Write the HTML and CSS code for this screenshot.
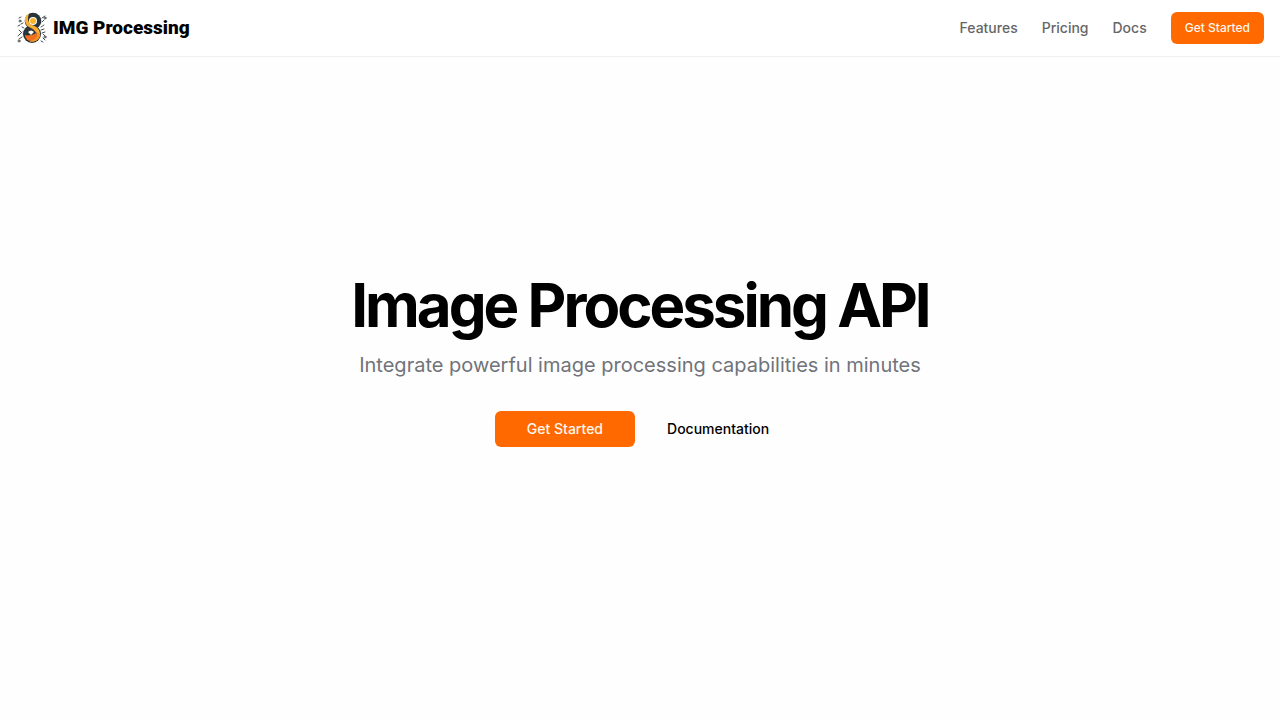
FILE: index.html
```
<!DOCTYPE html>
<html lang="en">
<head>
    <meta charset="UTF-8">
    <meta name="viewport" content="width=device-width, initial-scale=1.0">
    <title>IMG Processing</title>
    <link rel="stylesheet" href="styles.css">
</head>
<body>
    <header class="navbar">
        <a class="brand" href="#">
            <svg class="brand-logo" viewBox="0 0 32 32" fill="none" aria-hidden="true">
                <!-- sparks and circuit dots -->
                <g stroke="#4a5055" stroke-width="1" stroke-linecap="round">
                    <path d="M3 6l2-1M7 11l-2 1M2 14l2-1M6 15l2 1M3 18l3 3M2 24l4-4M3 27l3-2M26 6l3-2M26 10l2-2M28 13l-3 2M25 18l3-1M29 20l-3 1M27 26l2 2M27 22l2 2M25 29l2 1"/>
                    <circle cx="4" cy="9" r="1"/>
                    <circle cx="29" cy="6" r="1"/>
                    <circle cx="29" cy="25" r="1"/>
                    <circle cx="3" cy="29" r="1"/>
                </g>
                <!-- figure eight -->
                <circle cx="17" cy="9" r="8.3" fill="#27343b"/>
                <circle cx="16" cy="22" r="9" fill="#27343b"/>
                <circle cx="15" cy="23" r="6" fill="#f26f21"/>
                <path d="M9 23c0-5 3-6 6-6c2 0 4 2 5 4c-2 2-9 3-11 2z" fill="#27343b"/>
                <path d="M12 20c2-2 4-2 6 0l-3 3z" fill="#fff"/>
                <path d="M13 2C7 4 8 12 13 15c4 2 8 4 8 8c0 4-4 6-8 6c5 2 11-1 11-7c0-5-4-8-8-9c-4-2-5-6-3-11z" fill="#fbb034"/>
                <path d="M21 20c1 5-2 9-8 9c5 2 11-1 11-7z" fill="#f7931e"/>
                <circle cx="17" cy="9" r="4" fill="#fff"/>
                <circle cx="17" cy="9" r="3" fill="#f9b52b"/>
            </svg>
            <span class="brand-name">IMG Processing</span>
        </a>
        <nav class="nav-links">
            <a href="#features">Features</a>
            <a href="#pricing">Pricing</a>
            <a href="#docs">Docs</a>
            <button type="button" class="button button-small">Get Started</button>
        </nav>
    </header>

    <main class="hero">
        <h1>Image Processing API</h1>
        <p>Integrate powerful image processing capabilities in minutes</p>
        <div class="hero-actions">
            <button type="button" class="button button-large">Get Started</button>
            <a class="docs-link" href="#docs">Documentation</a>
        </div>
    </main>
</body>
</html>
```
FILE: styles.css
```
* {
    box-sizing: border-box;
}
body {
    font-family: Inter, sans-serif;
    background-color: #fefefe;
    color: #000;
    margin: 0;
    min-height: 100vh;
    display: flex;
    flex-direction: column;
}
a {
    color: inherit;
    text-decoration: none;
}
.navbar {
    display: flex;
    align-items: center;
    justify-content: space-between;
    padding: 12px 16px;
    background-color: #fff;
    border-bottom: 1px solid #f0f0f0;
}
.brand {
    display: flex;
    align-items: center;
    gap: 5px;
}
.brand-logo {
    width: 32px;
    height: 32px;
}
.brand-name {
    font-family: Roboto, sans-serif;
    font-size: 19px;
    line-height: 24px;
    font-weight: 900;
}
.nav-links {
    display: flex;
    align-items: center;
    gap: 24px;
    font-size: 14px;
    line-height: 20px;
    font-weight: 500;
    color: #666;
}
.nav-links a:hover {
    color: #000;
}
.button {
    border: none;
    border-radius: 6px;
    background-color: #ff6900;
    color: #fff7ed;
    font-family: inherit;
    font-weight: 500;
    cursor: pointer;
}
.button:hover {
    background-color: #e65f00;
}
.button-small {
    padding: 8px 14px;
    font-size: 12px;
    line-height: 16px;
}
.button-large {
    padding: 8px 32px;
    font-size: 14px;
    line-height: 20px;
}
.hero {
    flex: 1;
    display: flex;
    flex-direction: column;
    align-items: center;
    justify-content: center;
    padding: 16px;
    padding-bottom: 72px;
    text-align: center;
}
.hero h1 {
    margin: 0;
    font-size: 60px;
    line-height: 60px;
    font-weight: 700;
    letter-spacing: -0.05em;
}
.hero p {
    margin: 16px 0 32px;
    font-size: 20px;
    line-height: 28px;
    color: #70737a;
}
.hero-actions {
    display: flex;
    align-items: center;
    gap: 16px;
}
.docs-link {
    padding: 8px 16px;
    font-size: 14px;
    line-height: 20px;
    font-weight: 500;
}
```
